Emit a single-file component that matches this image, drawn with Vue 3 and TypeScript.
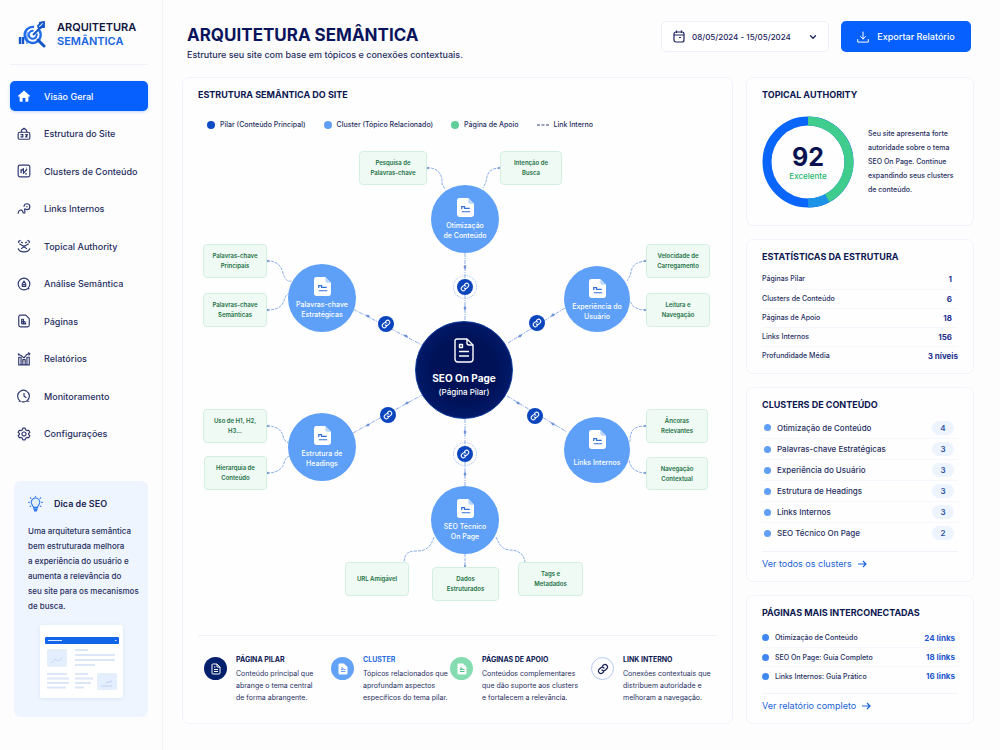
<script setup lang="ts">
interface NavItem {
  label: string
  paths: string[]
  filled?: boolean
}

interface Circle {
  x: number
  y: number
  r: number
}

interface Cluster extends Circle {
  lines: string[]
}

interface SupportPage {
  x: number
  y: number
  w: number
  h: number
  lines: string[]
}

interface LinkBadge {
  x: number
  y: number
  ringed: boolean
}

const origin = { x: 198, y: 140 }
const canvas = { w: 519, h: 470 }

const navItems: NavItem[] = [
  { label: 'Visão Geral', filled: true, paths: ['M12 2.5 1.8 11.6a.8.8 0 0 0 .5 1.4H4.5v7.2c0 .9.6 1.5 1.5 1.5h3.6v-6.4h4.8v6.4H18c.9 0 1.500-.6 1.500-1.500V13h2.200a.8.8 0 0 0 .5-1.400Z'] },
  { label: 'Estrutura do Site', paths: ['M5 9h14a3 3 0 0 1 3 3v7a2 2 0 0 1-2 2H4a2 2 0 0 1-2-2v-7a3 3 0 0 1 3-3Z', 'M7 9 8 5l4-3 4 3 1 4', 'M6 13h4v4H6', 'M14 13h4l-3 4h3'] },
  { label: 'Clusters de Conteúdo', paths: ['M5 2h14a3 3 0 0 1 3 3v14a3 3 0 0 1-3 3H5a3 3 0 0 1-3-3V5a3 3 0 0 1 3-3Z', 'M7 16V9M7 12l4-4v8l6-7', 'M14 17h3M16 7h1'] },
  { label: 'Links Internos', paths: ['M12 8a5 5 0 1 1 5 5c-2 0-3-1-4-2', 'M16 8h2', 'M2 20c0-5 3-7 6-6 3 1 1 5 4 5s1-4 1-7'] },
  { label: 'Topical Authority', paths: ['M3 7V4l3-2M21 7V4l-3-2', 'M2 16c1 4 4 6 10 6s9-2 10-6', 'M4 8l8 5 8-5', 'M7 5l3 2M17 5l-3 2', 'M12 13l-5 4M12 13l5 4', 'M12 11v4'] },
  { label: 'Análise Semântica', paths: ['M12 2a10 10 0 1 1 0 20 10 10 0 0 1 0-20Z', 'M12 7l-3 5v4h6v-4Z', 'M10 13h4', 'M19 19l2 2'] },
  { label: 'Páginas', paths: ['M5 2h10l6 6v11a3 3 0 0 1-3 3H6a3 3 0 0 1-3-3V4Z', 'M8 17V9h3v8M14 13v4M8 13h6M8 17h8'] },
  { label: 'Relatórios', paths: ['M3 22V9h4v13M10 22V13h4v9M17 22V9h4v13M2 22h20', 'M2 4l5 2 5 4 5-6 5-1', 'M3 2v4M19 1l3 2-2 3'] },
  { label: 'Monitoramento', paths: ['M5 20a10 10 0 1 1 3 1.600', 'M12 7v5l4 3', 'M3 21h4M17 21h4'] },
  {
    label: 'Configurações',
    paths: [
      'M10 2h4l1 3 2 1.200 3-.7 2 3.500-2 2v2l2 2-2 3.500-3-.7-2 1.200-1 3h-4l-1-3-2-1.200-3 .7-2-3.500 2-2v-2l-2-2 2-3.500 3 .7 2-1.200Z',
      'M12 8.500a3.500 3.500 0 1 1 0 7 3.500 3.500 0 0 1 0-7Z',
    ],
  },
]

const tipLines = [
  'Uma arquitetura semântica',
  'bem estruturada melhora',
  'a experiência do usuário e',
  'aumenta a relevância do',
  'seu site para os mecanismos',
  'de busca.',
]

const pillar: Circle = { x: 464, y: 370, r: 49 }

const clusters: Cluster[] = [
  { x: 465, y: 219, r: 34, lines: ['Otimização', 'de Conteúdo'] },
  { x: 322, y: 298, r: 34, lines: ['Palavras-chave', 'Estratégicas'] },
  { x: 597, y: 299, r: 33, lines: ['Experiência do', 'Usuário'] },
  { x: 322, y: 447, r: 34, lines: ['Estrutura de', 'Headings'] },
  { x: 597, y: 450, r: 33, lines: ['Links Internos'] },
  { x: 465, y: 520, r: 34, lines: ['SEO Técnico', 'On Page'] },
]

const supportPages: SupportPage[] = [
  { x: 359, y: 151, w: 68, h: 34, lines: ['Pesquisa de', 'Palavras-chave'] },
  { x: 500, y: 151, w: 62, h: 34, lines: ['Intenção de', 'Busca'] },
  { x: 203, y: 244, w: 64, h: 34, lines: ['Palavras-chave', 'Principais'] },
  { x: 203, y: 293, w: 64, h: 34, lines: ['Palavras-chave', 'Semânticas'] },
  { x: 203, y: 409, w: 64, h: 34, lines: ['Uso de H1, H2,', 'H3...'] },
  { x: 204, y: 456, w: 63, h: 34, lines: ['Hierarquia de', 'Conteúdo'] },
  { x: 646, y: 244, w: 64, h: 34, lines: ['Velocidade de', 'Carregamento'] },
  { x: 646, y: 293, w: 64, h: 34, lines: ['Leitura e', 'Navegação'] },
  { x: 646, y: 409, w: 62, h: 34, lines: ['Âncoras', 'Relevantes'] },
  { x: 646, y: 457, w: 62, h: 33, lines: ['Navegação', 'Contextual'] },
  { x: 345, y: 562, w: 64, h: 34, lines: ['URL Amigável'] },
  { x: 432, y: 567, w: 67, h: 34, lines: ['Dados', 'Estruturados'] },
  { x: 518, y: 562, w: 65, h: 34, lines: ['Tags e', 'Metadados'] },
]

const badges: LinkBadge[] = [
  { x: 465, y: 287, ringed: true },
  { x: 386, y: 324, ringed: false },
  { x: 537, y: 323, ringed: false },
  { x: 388, y: 415, ringed: false },
  { x: 535, y: 416, ringed: false },
  { x: 465, y: 454, ringed: true },
]

const branches = [
  'M427 168 C437 167 443 174 442 184 L445 189',
  'M500 168 C488 168 487 175 486 182 L483 188',
  'M267 261 C278 261 281 266 283 273 S288 282 292 281',
  'M267 310 C282 310 283 303 285 298 S289 294 291 292',
  'M267 426 C278 426 282 431 283 436 S287 443 290 443',
  'M267 473 C278 473 283 468 284 463 S288 456 291 456',
  'M646 261 C634 262 632 267 631 272 S628 279 627 281',
  'M646 310 C636 310 632 306 630 301',
  'M646 426 C632 426 630 432 630 442',
  'M646 473 C635 473 630 467 629 460',
  'M434 537 C431 546 427 551 417 551 S405 554 404 562',
  'M496 537 C500 546 503 550 510 550 S524 553 525 562',
  'M465 554 V567',
]

const branchEnds = [
  [428, 168], [499, 168], [268, 261], [268, 310], [268, 426], [268, 473],
  [645, 261], [645, 310], [645, 426], [645, 473], [465, 566],
]

const trunks = [
  'M465 253 V321',
  'M465 419 V486',
  'M353 309 L422 345',
  'M353 433 L422 395',
  'M508 343 L565 308',
  'M507 396 L567 432',
]

const ticks = [
  [465, 267, 90], [465, 308, 90], [465, 432, 90], [465, 474, 90],
  [368, 316, 27], [406, 336, 27], [368, 425, -29], [407, 403, -29],
  [520, 336, -31], [553, 315, -31], [518, 403, 31], [553, 424, 31],
]

const stats = [
  { label: 'Páginas Pilar', value: '1', wide: false },
  { label: 'Clusters de Conteúdo', value: '6', wide: false },
  { label: 'Páginas de Apoio', value: '18', wide: false },
  { label: 'Links Internos', value: '156', wide: false },
  { label: 'Profundidade Média', value: '3 níveis', wide: true },
]

const clusterCounts = [
  { label: 'Otimização de Conteúdo', count: 4 },
  { label: 'Palavras-chave Estratégicas', count: 3 },
  { label: 'Experiência do Usuário', count: 3 },
  { label: 'Estrutura de Headings', count: 3 },
  { label: 'Links Internos', count: 3 },
  { label: 'SEO Técnico On Page', count: 2 },
]

const topPages = [
  { label: 'Otimização de Conteúdo', links: 24 },
  { label: 'SEO On Page: Guia Completo', links: 18 },
  { label: 'Links Internos: Guia Prático', links: 16 },
]

const glossary = [
  { kind: 'pillar', title: 'PÁGINA PILAR', lines: ['Conteúdo principal que', 'abrange o tema central', 'de forma abrangente.'] },
  { kind: 'cluster', title: 'CLUSTER', lines: ['Tópicos relacionados que', 'aprofundam aspectos', 'específicos do tema pilar.'] },
  { kind: 'support', title: 'PÁGINAS DE APOIO', lines: ['Conteúdos complementares', 'que dão suporte aos clusters', 'e fortalecem a relevância.'] },
  { kind: 'link', title: 'LINK INTERNO', lines: ['Conexões contextuais que', 'distribuem autoridade e', 'melhoram a navegação.'] },
]

const circleBox = (c: Circle) => ({
  left: `${c.x - c.r - origin.x}px`,
  top: `${c.y - c.r - origin.y}px`,
  width: `${c.r * 2}px`,
  height: `${c.r * 2}px`,
})

const pageBox = (p: SupportPage) => ({
  left: `${p.x - origin.x}px`,
  top: `${p.y - origin.y}px`,
  width: `${p.w}px`,
  height: `${p.h}px`,
})
</script>

<template>
  <div class="app">
    <aside class="sidebar">
      <div class="brand">
        <svg class="brand-icon" viewBox="0 0 28 28" fill="none">
          <path d="M2 17v7M5 17v7" stroke="#1557c8" stroke-width="2.400" />
          <path d="M9 24V12" stroke="#6ba0f5" stroke-width="1.500" />
          <path d="M21 10a8 8 0 1 1-5-3" stroke="#1f6bea" stroke-width="2.400" />
          <path d="M18.500 13.500a4 4 0 1 1-3-2.600" stroke="#1f6bea" stroke-width="2" />
          <path d="M15 15 26 4M21 3l5-1v6M24 2l-4 4 1 3 5-3" stroke="#1557c8" stroke-width="1.900" stroke-linejoin="round" />
          <path d="M20 20l6 6" stroke="#1557c8" stroke-width="3" stroke-linecap="round" />
        </svg>
        <div class="brand-name">
          <span>ARQUITETURA</span>
          <span class="brand-accent">SEMÂNTICA</span>
        </div>
      </div>
      <nav class="nav" aria-label="Principal">
        <a v-for="(item, i) in navItems" :key="item.label" href="#" class="nav-link" :class="{ active: i === 0 }">
          <svg class="nav-icon" :class="{ filled: item.filled }" viewBox="0 0 24 24">
            <path v-for="d in item.paths" :key="d" :d="d" />
          </svg>
          <span>{{ item.label }}</span>
        </a>
      </nav>
      <section class="tip">
        <div class="tip-head">
          <svg class="bulb" viewBox="0 0 18 20" fill="none" stroke="#2f78ee" stroke-width="1.300" stroke-linecap="round">
            <path d="M6.500 14c0-2-2.700-3-2.700-6a5.200 5.200 0 0 1 10.400 0c0 3-2.700 4-2.700 6Z" fill="#e3eefe" />
            <path d="M7 16h4M8 18h2" stroke-width="2" />
            <path d="M9 .8v.6M2.800 2.500l.7.7M15.200 2.500l-.7.7M.8 8h.8M16.400 8h.8M2.500 13l.7-.6M15.500 13l-.7-.6" />
          </svg>
          <h2>Dica de SEO</h2>
        </div>
        <p><span v-for="line in tipLines" :key="line">{{ line }}</span></p>
        <svg class="mock" viewBox="0 0 83 73">
          <rect width="83" height="73" rx="2" fill="#fff" />
          <rect x="5" y="12" width="74" height="7" rx="1" fill="#1264e8" />
          <path d="M8 15.500h14M75 15.500h1.500" stroke="#d6e6ff" stroke-width="1.200" />
          <rect x="7" y="24" width="20" height="18" rx="2" fill="#e4eefd" />
          <path d="M11 38l4-4 3 2 5-4" fill="none" stroke="#c4d9f8" />
          <path d="M35 25h13M35 30h40M35 35h40M35 40h20M7 49h20M7 53.500h22M7 58h22M7 62.500h19M35 49h13M35 53.500h18M35 58h16M35 62.500h9" stroke="#dbe6f8" stroke-width="1.800" />
          <rect x="57" y="48" width="20" height="17" rx="2" fill="#e4eefd" />
          <path d="M61 61h11M66 58l6-2" stroke="#b9d2f7" />
        </svg>
      </section>
    </aside>

    <main class="main">
      <header class="topbar">
        <div>
          <h1>ARQUITETURA SEMÂNTICA</h1>
          <p class="subtitle">Estruture seu site com base em tópicos e conexões contextuais.</p>
        </div>
        <div class="actions">
          <button type="button" class="date-button">
            <svg class="calendar" viewBox="0 0 12 13" fill="none" stroke="#1b2460" stroke-width="1.200">
              <rect x="1" y="2" width="10" height="10" rx="2" />
              <path d="M1 5h10M3.500 .5v2.500M8.500 .5v2.500M6 7.500h2" />
            </svg>
            <span>08/05/2024 - 15/05/2024</span>
            <svg class="chevron" viewBox="0 0 8 8" fill="none" stroke="#1b2460" stroke-width="1.300" stroke-linecap="round">
              <path d="M1.500 2.800 4 5.300l2.500-2.500" />
            </svg>
          </button>
          <button type="button" class="export-button">
            <svg class="download" viewBox="0 0 12 12" fill="none" stroke="#fff" stroke-linecap="round" stroke-linejoin="round">
              <path d="M6 1v7M3.500 5.500 6 8l2.500-2.500M.7 8.500v2.600h10.600V8.500" />
            </svg>
            <span>Exportar Relatório</span>
          </button>
        </div>
      </header>

      <div class="columns">
        <section class="card map-card">
          <h2>ESTRUTURA SEMÂNTICA DO SITE</h2>
          <ul class="legend">
            <li><i class="dot dark"></i>Pilar (Conteúdo Principal)</li>
            <li><i class="dot"></i>Cluster (Tópico Relacionado)</li>
            <li><i class="dot green"></i>Página de Apoio</li>
            <li>
              <svg class="dash" viewBox="0 0 12 4"><path d="M0 2h3M4.500 2h3M9 2h3" stroke="#33427f" stroke-width="1.100" /></svg>Link Interno
            </li>
          </ul>

          <div class="canvas">
            <svg class="wires" :viewBox="`${origin.x} ${origin.y} ${canvas.w} ${canvas.h}`" fill="none">
              <path v-for="d in trunks" :key="d" :d="d" class="trunk" />
              <path v-for="d in branches" :key="d" :d="d" class="branch" />
              <circle v-for="[x, y] in branchEnds" :key="`${x}-${y}`" :cx="x" :cy="y" r="1.200" fill="#7fa3cf" />
              <path
                v-for="[x, y, a] in ticks"
                :key="`t${x}-${y}`"
                d="M-2.500 0 0-1.500 2.500 0 0 1.500Z"
                :transform="`translate(${x} ${y}) rotate(${a})`"
                fill="#6f92d6"
              />
            </svg>

            <div v-for="page in supportPages" :key="page.lines.join(' ')" class="page-node" :style="pageBox(page)">
              <span v-for="line in page.lines" :key="line">{{ line }}</span>
            </div>

            <div v-for="c in clusters" :key="c.lines.join(' ')" class="cluster-node" :style="circleBox(c)">
              <svg class="file" viewBox="0 0 18 20">
                <path d="M3 0h9l6 6v11.500a2.500 2.500 0 0 1-2.500 2.500h-13A2.500 2.500 0 0 1 0 17.500v-15A2.500 2.500 0 0 1 2.500 0Z" fill="#fff" />
                <path d="M12 0v4a2 2 0 0 0 2 2h4" fill="#b9d5fd" />
                <path d="M5 11.500V9h3v2h5.500M5 14.500h9" stroke="#3472d8" stroke-width="1.300" fill="none" />
              </svg>
              <div class="cluster-label"><span v-for="line in c.lines" :key="line">{{ line }}</span></div>
            </div>

            <div class="pillar-node" :style="circleBox(pillar)">
              <svg class="pillar-icon" viewBox="0 0 20 25" fill="none" stroke="#fff" stroke-width="1.400" stroke-linejoin="round">
                <path d="M3 1h10l6 6v14a3 3 0 0 1-3 3H4a3 3 0 0 1-3-3V3a2 2 0 0 1 2-2Z" />
                <path d="M13 1v4a2 2 0 0 0 2 2h4M5.500 6.500h3v3h-3ZM5 13.500h10M5 18h10" />
              </svg>
              <strong>SEO On Page</strong>
              <span>(Página Pilar)</span>
            </div>

            <div
              v-for="b in badges"
              :key="`${b.x}-${b.y}`"
              class="badge"
              :class="{ ringed: b.ringed }"
              :style="circleBox({ x: b.x, y: b.y, r: b.ringed ? 12 : 8 })"
            >
              <span class="badge-core">
                <svg viewBox="0 0 24 24" fill="none" stroke="#fff" stroke-width="2.600" stroke-linecap="round">
                  <path d="M10 14a5 5 0 0 0 7 0l3-3a5 5 0 0 0-7-7l-2 2M14 10a5 5 0 0 0-7 0l-3 3a5 5 0 0 0 7 7l2-2" />
                </svg>
              </span>
            </div>
          </div>

          <div class="glossary">
            <article v-for="g in glossary" :key="g.kind" :class="g.kind">
              <span class="glossary-icon">
                <svg v-if="g.kind === 'link'" viewBox="0 0 24 24" fill="none" stroke="#1a2456" stroke-width="2.400" stroke-linecap="round">
                  <path d="M10 14a5 5 0 0 0 7 0l3-3a5 5 0 0 0-7-7l-2 2M14 10a5 5 0 0 0-7 0l-3 3a5 5 0 0 0 7 7l2-2" />
                </svg>
                <svg v-else-if="g.kind === 'pillar'" viewBox="0 0 24 24" fill="none" stroke="#fff" stroke-width="2">
                  <path d="M5 2h9l6 6v12a2 2 0 0 1-2 2H6a2 2 0 0 1-2-2V3ZM14 2v6h6M8 8h3M8 13h8M8 17h8" />
                </svg>
                <svg v-else viewBox="0 0 24 24" fill="#fff">
                  <path d="M5 1h9l7 7v12a3 3 0 0 1-3 3H6a3 3 0 0 1-3-3V3a2 2 0 0 1 2-2Z" />
                  <path class="glyph" d="M8 10h4v3H8M13 13h4M8 17h9" />
                </svg>
              </span>
              <div>
                <h3>{{ g.title }}</h3>
                <p><span v-for="line in g.lines" :key="line">{{ line }}</span></p>
              </div>
            </article>
          </div>
        </section>

        <div class="side">
          <section class="card authority">
            <h2>TOPICAL AUTHORITY</h2>
            <div class="authority-body">
              <div class="gauge">
                <svg viewBox="0 0 92 92" fill="none" stroke-width="9">
                  <circle cx="46" cy="46" r="41" stroke="#0a66fb" />
                  <path d="M46 5A41 41 0 0 1 65 82.300" stroke="#40cc8c" />
                  <path d="M65 82.300A41 41 0 0 1 46 87" stroke="#1c93e6" />
                </svg>
                <div class="score">
                  <strong>92</strong>
                  <span>Excelente</span>
                </div>
              </div>
              <p>
                <span>Seu site apresenta forte</span>
                <span>autoridade sobre o tema</span>
                <span>SEO On Page. Continue</span>
                <span>expandindo seus clusters</span>
                <span>de conteúdo.</span>
              </p>
            </div>
          </section>

          <section class="card stats">
            <h2>ESTATÍSTICAS DA ESTRUTURA</h2>
            <table>
              <tbody>
                <tr v-for="s in stats" :key="s.label">
                  <th scope="row">{{ s.label }}</th>
                  <td :class="{ wide: s.wide }">{{ s.value }}</td>
                </tr>
              </tbody>
            </table>
          </section>

          <section class="card cluster-list">
            <h2>CLUSTERS DE CONTEÚDO</h2>
            <ul>
              <li v-for="c in clusterCounts" :key="c.label">
                <i class="dot"></i><span>{{ c.label }}</span><b>{{ c.count }}</b>
              </li>
            </ul>
            <a href="#" class="more">Ver todos os clusters
              <svg viewBox="0 0 10 8"><path d="M1 4h8M6 1l3 3-3 3" /></svg>
            </a>
          </section>

          <section class="card page-list">
            <h2>PÁGINAS MAIS INTERCONECTADAS</h2>
            <ul>
              <li v-for="p in topPages" :key="p.label">
                <i class="dot"></i><span>{{ p.label }}</span><b>{{ p.links }} links</b>
              </li>
            </ul>
            <a href="#" class="more">Ver relatório completo
              <svg viewBox="0 0 10 8"><path d="M1 4h8M6 1l3 3-3 3" /></svg>
            </a>
          </section>
        </div>
      </div>
    </main>
  </div>
</template>

<style>
body {
  margin: 0;
  background: #fdfdfe;
}
</style>

<style scoped>
.app {
  display: flex;
  min-height: 100vh;
  box-sizing: border-box;
  font-family: Inter, "Liberation Sans", sans-serif;
  font-size: 8px;
  font-weight: 500;
  color: #262e60;
}
.app *,
.app *::before {
  box-sizing: border-box;
}
h1, h2, h3, p, ul {
  margin: 0;
  padding: 0;
}
ul {
  list-style: none;
}
svg {
  display: block;
  flex: none;
}
p > span {
  display: block;
  white-space: nowrap;
}
a {
  text-decoration: none;
}
h2 {
  font-size: 9px;
  line-height: 12px;
  font-weight: 700;
  color: #0c1650;
}

.sidebar {
  flex: none;
  width: 163px;
  padding: 0 14px 0 10px;
  border-right: 1px solid #f1f3f9;
}
.brand {
  display: flex;
  align-items: center;
  gap: 11px;
  height: 65px;
  padding: 4px 0 0 8px;
  border-bottom: 1px solid #f0f2f9;
}
.brand-icon {
  width: 28px;
  height: 28px;
}
.brand-name {
  display: flex;
  flex-direction: column;
  font-size: 11px;
  line-height: 14px;
  font-weight: 600;
  color: #0e1440;
}
.brand-accent {
  color: #1664e0;
}
.nav {
  display: flex;
  flex-direction: column;
  justify-content: space-between;
  height: 368px;
  margin-top: 16px;
}
.nav-link {
  display: flex;
  align-items: center;
  gap: 13px;
  height: 30px;
  padding: 0 7px;
  border-radius: 5px;
  font-size: 9px;
  color: #262e60;
}
.nav-link.active {
  background: #0560fd;
  box-shadow: 0 1px 3px #0560fd40;
  color: #fff;
}
.nav-icon {
  width: 14px;
  height: 14px;
  fill: none;
  stroke: #2e3870;
  stroke-width: 2;
  stroke-linejoin: round;
}
.nav-icon.filled {
  fill: #fff;
  stroke: none;
}
.tip {
  margin: 32px 0 0 4px;
  padding: 14px 14px 19px;
  border-radius: 6px;
  background: #eff5fe;
}
.tip-head {
  display: flex;
  align-items: center;
  gap: 11px;
}
.tip-head h2 {
  font-weight: 600;
  color: #1b2350;
}
.bulb {
  width: 15px;
  height: 18px;
}
.tip p {
  margin-top: 11px;
  line-height: 15px;
}
.mock {
  width: 83px;
  height: 73px;
  margin: 11px 0 0 12px;
  filter: drop-shadow(0 1px 2px #3b78d81f);
}

.main {
  flex: 1;
  min-width: 0;
  padding: 21px 26px 26px 19px;
}
.topbar {
  display: flex;
  justify-content: space-between;
  align-items: flex-start;
  padding: 0 3px 0 5px;
  height: 56px;
}
h1 {
  margin-top: 3px;
  font-size: 17px;
  line-height: 22px;
  font-weight: 700;
  color: #09145c;
}
.subtitle {
  margin-top: 2px;
  font-size: 9px;
  line-height: 14px;
}
.actions {
  display: flex;
  gap: 12px;
}
button {
  display: flex;
  align-items: center;
  height: 31px;
  font: inherit;
  border-radius: 5px;
}
.date-button {
  width: 168px;
  padding: 0 11px;
  border: 1px solid #eef1fa;
  background: #fff;
  color: #1b2460;
}
.date-button span {
  margin-left: 7px;
}
.calendar {
  width: 12px;
  height: 13px;
}
.chevron {
  width: 8px;
  height: 8px;
  margin-left: auto;
}
.export-button {
  width: 130px;
  justify-content: center;
  gap: 8px;
  padding: 0;
  border: 0;
  background: #0560fd;
  color: #fff;
  font-size: 9px;
}
.download {
  width: 12px;
  height: 12px;
}

.columns {
  display: flex;
  gap: 13px;
}
.card {
  padding: 11px 15px 0;
  border: 1px solid #f0f3fa;
  border-radius: 7px;
  background: #fefeff;
}
.map-card {
  flex: 1;
  min-width: 0;
}
.legend {
  display: flex;
  align-items: center;
  gap: 18px;
  margin: 19px 0 0 9px;
  font-size: 7px;
  line-height: 10px;
}
.legend li {
  display: flex;
  align-items: center;
  gap: 5px;
  white-space: nowrap;
}
.dot {
  flex: none;
  width: 8px;
  height: 8px;
  border-radius: 50%;
  background: #609ff5;
}
.dot.dark {
  background: #0c4cc8;
}
.dot.green {
  background: #5ecf98;
}
.dash {
  width: 12px;
  height: 4px;
}
.canvas {
  position: relative;
  width: 519px;
  height: 470px;
  margin: 10px auto 0;
}
.wires {
  width: 100%;
  height: 100%;
}
.trunk {
  stroke: #8fb0ea;
  stroke-dasharray: 4 1 1 1;
}
.branch {
  stroke: #8aaee6;
  stroke-dasharray: 3 1;
}
.page-node,
.cluster-node,
.pillar-node,
.badge {
  position: absolute;
  display: flex;
  flex-direction: column;
  align-items: center;
  white-space: nowrap;
}
.page-node {
  justify-content: center;
  border: 1px solid #d3efe0;
  border-radius: 4px;
  background: #f0faf5;
  color: #1a7044;
  font-size: 6px;
  line-height: 10px;
  font-weight: 600;
}
.cluster-node {
  padding-top: 13px;
  border-radius: 50%;
  background: #5e9ff8;
  color: #fff;
  font-size: 7px;
  line-height: 10px;
}
.file {
  width: 17px;
  height: 19px;
}
.cluster-label {
  display: flex;
  flex-direction: column;
  justify-content: center;
  align-items: center;
  height: 20px;
  margin-top: 4px;
}
.pillar-node {
  padding-top: 16px;
  border: 1px solid #0d3d9e;
  border-radius: 50%;
  background: radial-gradient(circle, #001257 45%, #00217c);
  color: #fff;
}
.pillar-icon {
  width: 20px;
  height: 25px;
}
.pillar-node strong {
  margin-top: 8px;
  font-size: 10px;
  line-height: 14px;
  font-weight: 700;
}
.pillar-node span {
  font-size: 8px;
  line-height: 14px;
}
.badge {
  justify-content: center;
  border-radius: 50%;
}
.badge.ringed {
  border: 1px dotted #a5bff0;
}
.badge-core {
  display: grid;
  place-items: center;
  width: 16px;
  height: 16px;
  border-radius: 50%;
  background: #0a45bd;
}
.badge-core svg {
  width: 10px;
  height: 10px;
}
.glossary {
  display: grid;
  grid-template-columns: 127fr 119fr 141fr 126fr;
  margin-top: 25px;
  padding: 19px 0 0 6px;
  border-top: 1px solid #f0f2f9;
}
.glossary article {
  display: flex;
  gap: 9px;
  font-size: 7px;
  line-height: 12px;
}
.glossary h3 {
  font-size: 7px;
  line-height: 10px;
  font-weight: 700;
  color: #0c1650;
}
.glossary p {
  margin-top: 3px;
  font-weight: 400;
}
.glossary-icon {
  display: grid;
  flex: none;
  place-items: center;
  width: 23px;
  height: 23px;
  margin-top: 2px;
  border-radius: 50%;
}
.glossary-icon svg {
  width: 12px;
  height: 12px;
}
.pillar .glossary-icon {
  background: #04206c;
}
.cluster .glossary-icon {
  background: #62a2f7;
}
.glossary .cluster h3 {
  color: #2a6ee0;
}
.support .glossary-icon {
  background: #85dcb0;
}
.link .glossary-icon {
  border: 1px solid #b5cbf0;
}
.glyph {
  fill: none;
  stroke: #62a2f7;
  stroke-width: 2;
}
.support .glyph {
  stroke: #4cbb85;
}

.side {
  flex: none;
  display: flex;
  flex-direction: column;
  gap: 13px;
  width: 228px;
}
.authority {
  padding-bottom: 17px;
}
.authority-body {
  display: flex;
  align-items: center;
  gap: 14px;
  margin-top: 15px;
}
.gauge {
  position: relative;
  flex: none;
  width: 92px;
  height: 92px;
}
.gauge svg {
  width: 92px;
  height: 92px;
}
.score {
  position: absolute;
  inset: 0;
  display: flex;
  flex-direction: column;
  align-items: center;
  justify-content: center;
  color: #22b56b;
}
.score strong {
  font-size: 25px;
  line-height: 28px;
  font-weight: 700;
  color: #0a1250;
}
.score span {
  font-size: 8px;
  line-height: 10px;
}
.authority p {
  font-size: 7px;
  line-height: 14px;
}
.stats {
  padding-bottom: 8px;
}
table {
  width: 100%;
  margin-top: 7px;
  border-collapse: collapse;
}
th,
td {
  height: 19px;
  padding: 0;
  line-height: 12px;
}
th {
  font-size: 7px;
  font-weight: 500;
  text-align: left;
}
td {
  padding-right: 6px;
  font-weight: 700;
  text-align: right;
  color: #1d2f8c;
}
td.wide {
  padding-right: 0;
}
tr + tr {
  border-top: 1px solid #f4f6fb;
}
.cluster-list ul {
  margin-top: 6px;
}
li b {
  margin-left: auto;
}
.cluster-list li {
  display: flex;
  align-items: center;
  gap: 6px;
  height: 21px;
  padding: 0 4px 0 2px;
}
.cluster-list .dot,
.page-list .dot {
  width: 7px;
  height: 7px;
}
.cluster-list li + li,
.page-list li + li {
  border-top: 1px solid #f5f7fc;
}
.cluster-list b {
  width: 22px;
  border-radius: 7px;
  background: #edf4fe;
  color: #2e549f;
  font-weight: 600;
  line-height: 14px;
  text-align: center;
}
.more {
  display: flex;
  align-items: center;
  gap: 5px;
  margin-top: 8px;
  padding-top: 6px;
  border-top: 1px solid #f0f3fa;
  color: #1b62d4;
  font-size: 9px;
  line-height: 12px;
  font-weight: 400;
}
.more svg {
  width: 10px;
  height: 8px;
  fill: none;
  stroke: #1b62d4;
  stroke-width: 1.2;
}
.cluster-list {
  padding-bottom: 11px;
}
.page-list ul {
  margin-top: 9px;
}
.page-list li {
  display: flex;
  align-items: center;
  gap: 6px;
  height: 19px;
  padding-right: 3px;
  font-size: 7px;
}
.page-list .dot {
  background: #3f86f0;
}
.page-list b {
  color: #1d55cc;
  font-size: 8px;
  font-weight: 700;
}
.page-list {
  padding-bottom: 11px;
}
</style>
